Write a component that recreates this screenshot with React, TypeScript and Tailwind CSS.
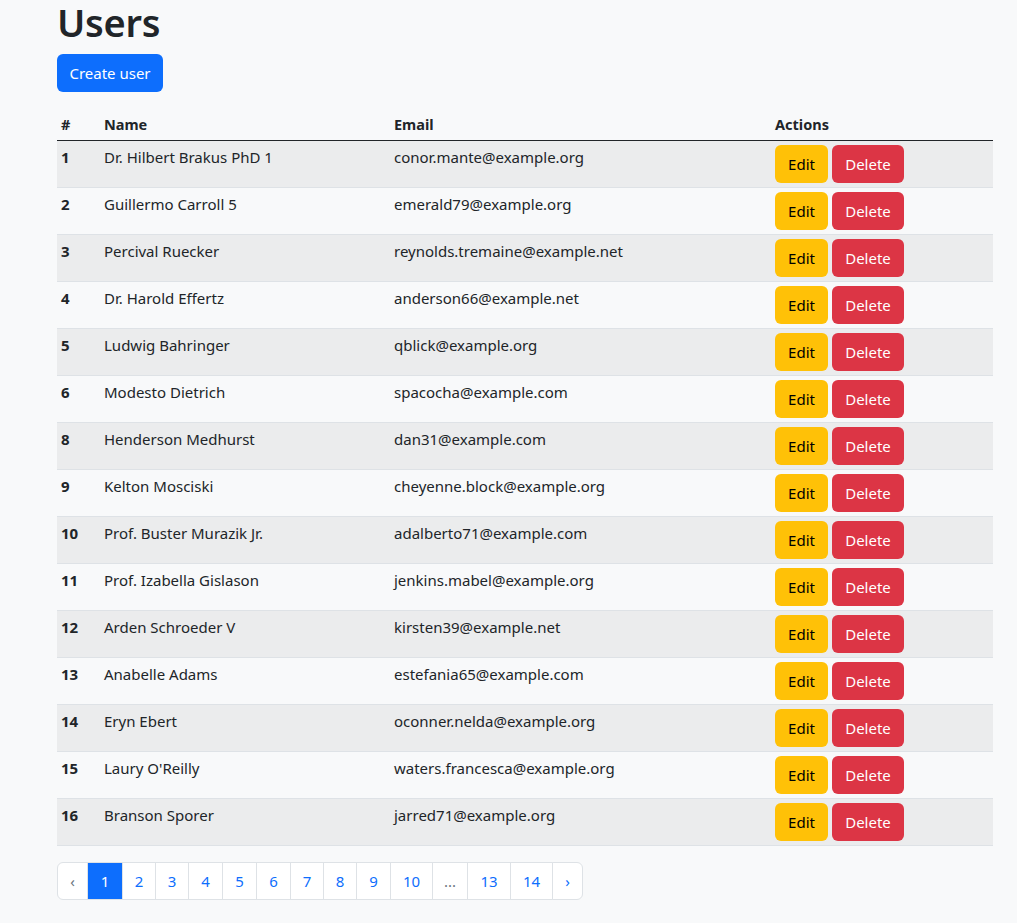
import React from "react";

const users: [number, string, string][] = [
  [1, "Dr. Hilbert Brakus PhD 1", "conor.mante@example.org"],
  [2, "Guillermo Carroll 5", "emerald79@example.org"],
  [3, "Percival Ruecker", "reynolds.tremaine@example.net"],
  [4, "Dr. Harold Effertz", "anderson66@example.net"],
  [5, "Ludwig Bahringer", "qblick@example.org"],
  [6, "Modesto Dietrich", "spacocha@example.com"],
  [8, "Henderson Medhurst", "dan31@example.com"],
  [9, "Kelton Mosciski", "cheyenne.block@example.org"],
  [10, "Prof. Buster Murazik Jr.", "adalberto71@example.com"],
  [11, "Prof. Izabella Gislason", "jenkins.mabel@example.org"],
  [12, "Arden Schroeder V", "kirsten39@example.net"],
  [13, "Anabelle Adams", "estefania65@example.com"],
  [14, "Eryn Ebert", "oconner.nelda@example.org"],
  [15, "Laury O'Reilly", "waters.francesca@example.org"],
  [16, "Branson Sporer", "jarred71@example.org"],
];

const pages: { label: string; w: string; active?: boolean; muted?: boolean; first?: boolean; last?: boolean }[] = [
  { label: "‹", w: "w-[31px]", muted: true, first: true },
  { label: "1", w: "w-[36px]", active: true },
  { label: "2", w: "w-[34px]" },
  { label: "3", w: "w-[34px]" },
  { label: "4", w: "w-[35px]" },
  { label: "5", w: "w-[35px]" },
  { label: "6", w: "w-[35px]" },
  { label: "7", w: "w-[34px]" },
  { label: "8", w: "w-[34px]" },
  { label: "9", w: "w-[35px]" },
  { label: "10", w: "w-[43px]" },
  { label: "...", w: "w-[36px]", muted: true },
  { label: "13", w: "w-[44px]" },
  { label: "14", w: "w-[43px]" },
  { label: "›", w: "w-[31px]", last: true },
];

export default function App() {
  return (
    <div
      className="min-h-[923px] bg-[#f8f9fa] text-[#212529] text-[15px]"
      style={{ fontFamily: '"Noto Sans", "Open Sans", sans-serif' }}
    >
      <div className="ml-[57px] w-[936px]">
        <h1 className="text-[38px] font-semibold leading-[44px] mb-[10px] tracking-[-0.3px]">Users</h1>
        <button className="h-[38px] w-[106px] rounded-[6px] bg-[#0d6efd] text-white text-[15px] leading-[24px]">
          Create user
        </button>
        <table className="mt-[16px] w-[936px] table-fixed border-collapse">
          <colgroup>
            <col className="w-[43px]" />
            <col className="w-[290px]" />
            <col className="w-[381px]" />
            <col className="w-[222px]" />
          </colgroup>
          <thead>
            <tr className="border-b border-[#212529]">
              <th className="px-[4px] py-[4px] text-left font-bold leading-[24px] text-[14.5px]">#</th>
              <th className="px-[4px] py-[4px] text-left font-bold leading-[24px] text-[14.5px]">Name</th>
              <th className="px-[4px] py-[4px] text-left font-bold leading-[24px] text-[14.5px]">Email</th>
              <th className="px-[4px] py-[4px] text-left font-bold leading-[24px] text-[14.5px]">Actions</th>
            </tr>
          </thead>
          <tbody>
            {users.map(([id, name, email], i) => (
              <tr
                key={id}
                className={
                  "border-b border-[#dee2e6] " + (i % 2 === 0 ? "bg-[#ebeced]" : "bg-[#f8f9fa]")
                }
              >
                <td className="px-[4px] py-[4px] align-top leading-[24px] font-bold">{id}</td>
                <td className="px-[4px] py-[4px] align-top leading-[24px]">{name}</td>
                <td className="px-[4px] py-[4px] align-top leading-[24px]">{email}</td>
                <td className="px-[4px] py-[4px] align-top leading-[24px]">
                  <div className="flex gap-[4px]">
                    <button className="h-[38px] w-[53px] rounded-[6px] bg-[#ffc107] text-[#000] text-[15px]">
                      Edit
                    </button>
                    <button className="h-[38px] w-[72px] rounded-[6px] bg-[#dc3545] text-white text-[15px]">
                      Delete
                    </button>
                  </div>
                </td>
              </tr>
            ))}
          </tbody>
        </table>
        <nav className="mt-[16px] flex">
          {pages.map((p, i) => (
            <span
              key={i}
              className={
                "h-[38px] flex items-center justify-center text-[15px] border border-[#dee2e6] " +
                p.w +
                (i > 0 ? " -ml-px" : "") +
                (p.first ? " rounded-l-[6px]" : "") +
                (p.last ? " rounded-r-[6px]" : "") +
                (p.active
                  ? " bg-[#0d6efd] border-[#0d6efd] text-white relative z-10"
                  : p.muted
                  ? " bg-white text-[#6c757d]"
                  : " bg-white text-[#0d6efd]")
              }
            >
              {p.label}
            </span>
          ))}
        </nav>
      </div>
    </div>
  );
}
